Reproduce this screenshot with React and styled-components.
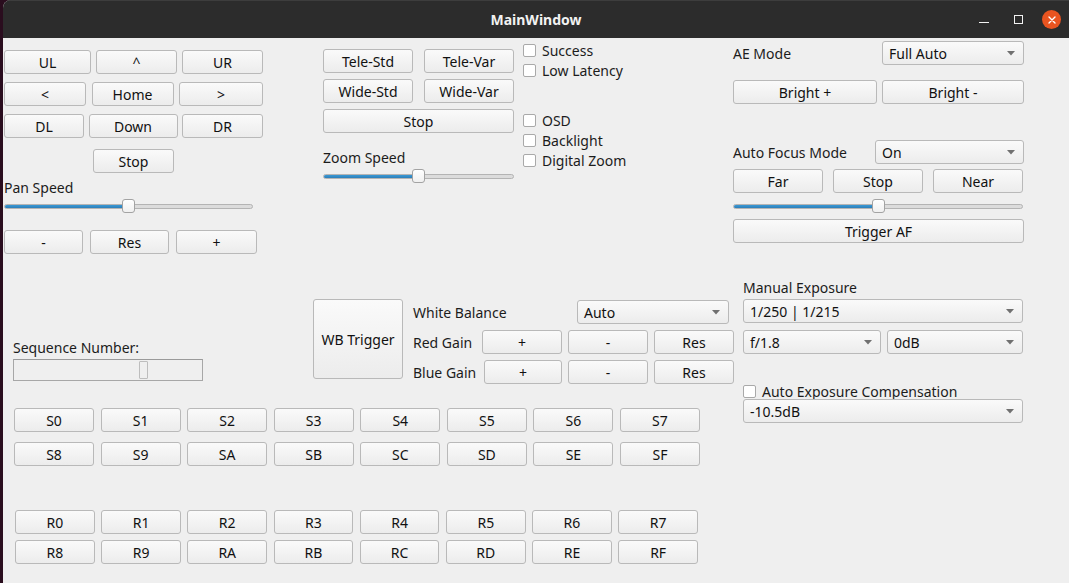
import React from 'react';
import styled, { createGlobalStyle } from 'styled-components';

// Qt "MainWindow" camera control panel, Fusion look on an Ubuntu title bar

const GlobalStyle = createGlobalStyle`
  html, body {
    margin: 0;
    padding: 0;
    background: #2a0d1e;
  }
  body {
    font-family: "Noto Sans", "Open Sans", sans-serif;
    font-size: 14px;
    color: #1c1c1c;
  }
`;

const Screen = styled.div`
  width: 1069px;
  height: 583px;
  display: flex;
  overflow: hidden;
  background: #2a0d1e;
`;

const Window = styled.div`
  margin-left: 3px;
  flex: 1;
  display: flex;
  flex-direction: column;
  background: #efefef;
  border-top-left-radius: 8px;
  overflow: hidden;
`;

const TitleBar = styled.div`
  height: 38px;
  flex: none;
  box-sizing: border-box;
  background: #2c2c2c;
  border-top: 1px solid #3d3d3d;
  display: grid;
  grid-template-columns: 1fr auto 1fr;
  align-items: center;
`;

const Title = styled.div`
  grid-column: 2;
  color: #f2f2f2;
  font-weight: bold;
  font-size: 14px;
`;

const WinControls = styled.div`
  grid-column: 3;
  display: flex;
  justify-content: flex-end;
  align-items: center;
  gap: 14px;
  padding-right: 8px;
`;

const CtlBox = styled.div`
  width: 20px;
  height: 20px;
  display: flex;
  align-items: center;
  justify-content: center;
`;

const MinLine = styled.span`
  width: 10px;
  height: 1.5px;
  background: #f2f2f2;
  margin-top: 6px;
`;

const MaxSquare = styled.span`
  width: 7px;
  height: 7px;
  border: 1px solid #f2f2f2;
`;

const CloseDot = styled.div`
  width: 19px;
  height: 19px;
  border-radius: 50%;
  background: #e95420;
  display: flex;
  align-items: center;
  justify-content: center;
`;

const Body = styled.div`
  flex: 1;
  display: flex;
  flex-direction: column;
`;

const TopRow = styled.div`
  height: 242px;
  display: flex;
  align-items: flex-start;
`;

const Column = styled.div`
  display: flex;
  flex-direction: column;
  width: ${p => p.$w}px;
  margin-left: ${p => p.$ml || 0}px;
  padding-top: ${p => p.$pt || 0}px;
  margin-top: ${p => p.$mt || 0}px;
`;

const BtnRow = styled.div`
  display: flex;
  align-items: center;
  justify-content: ${p => p.$justify || 'space-between'};
  width: ${p => (p.$w ? `${p.$w}px` : 'auto')};
  margin-top: ${p => p.$mt || 0}px;
  gap: ${p => p.$gap || 0}px;
`;

const Button = styled.div`
  box-sizing: border-box;
  width: ${p => p.$w}px;
  height: ${p => p.$h || 24}px;
  flex: none;
  display: flex;
  align-items: center;
  justify-content: center;
  border: 1px solid #b9b9b9;
  border-radius: 3px;
  background: linear-gradient(to bottom, #fafafa, #ececec);
  color: #111;
  font-size: 14px;
  white-space: nowrap;
  margin-left: ${p => p.$ml || 0}px;
  margin-top: ${p => p.$mt || 0}px;
`;

const Combo = styled(Button)`
  justify-content: space-between;
  padding: 0 8px 0 6px;
`;

const Label = styled.div`
  height: 17px;
  line-height: 17px;
  white-space: nowrap;
  color: #1c1c1c;
  width: ${p => (p.$w ? `${p.$w}px` : 'auto')};
  flex: none;
  margin-top: ${p => p.$mt || 0}px;
`;

const CheckRow = styled.div`
  height: ${p => p.$h || 20}px;
  display: flex;
  align-items: center;
  gap: 6px;
  white-space: nowrap;
  margin-top: ${p => p.$mt || 0}px;
`;

const CheckBox = styled.span`
  box-sizing: border-box;
  width: 13px;
  height: 13px;
  flex: none;
  border: 1px solid #a9a9a9;
  border-radius: 2px;
  background: #ffffff;
`;

const SliderWrap = styled.div`
  position: relative;
  width: ${p => p.$w}px;
  height: 14px;
  margin-top: ${p => p.$mt || 0}px;
  display: flex;
  align-items: center;
`;

const Groove = styled.div`
  box-sizing: border-box;
  width: 100%;
  height: 5px;
  border: 1px solid #b4b4b4;
  border-radius: 3px;
  background: #dcdcdc;
  overflow: hidden;
  display: flex;
`;

const GrooveFill = styled.div`
  height: 100%;
  background: linear-gradient(to bottom, #3b98d4, #2b7fb9);
  box-shadow: 0 0 0 1px #246a9c;
`;

const Handle = styled.div`
  position: absolute;
  top: 0;
  box-sizing: border-box;
  width: 13px;
  height: 14px;
  border: 1px solid #a3a3a3;
  border-radius: 3px;
  background: linear-gradient(to bottom, #ffffff, #f0f0f0);
`;

const MidRow = styled.div`
  display: flex;
  align-items: flex-start;
`;

const LeftMid = styled.div`
  width: 732px;
  display: flex;
  flex-direction: column;
`;

const WBRow = styled.div`
  display: flex;
  align-items: flex-start;
`;

const SeqBox = styled.div`
  position: relative;
  box-sizing: border-box;
  width: 190px;
  height: 22px;
  margin-top: 3px;
  border: 1px solid #a7a7a7;
  border-top-color: #9a9a9a;
  background: #efefef;
`;

const SeqHandle = styled.div`
  position: absolute;
  left: 125px;
  top: 1px;
  box-sizing: border-box;
  width: 9px;
  height: 18px;
  border: 1px solid #bdbdbd;
  border-radius: 1px;
`;

const KeyGrid = styled.div`
  display: grid;
  grid-template-columns: repeat(8, 1fr);
  column-gap: 6.5px;
  row-gap: ${p => p.$rowGap}px;
  width: ${p => p.$w}px;
  margin-left: ${p => p.$ml}px;
  margin-top: ${p => p.$mt}px;

  ${Button} {
    width: auto;
  }
`;

const Arrow = () => (
  <svg width="8" height="5" viewBox="0 0 8 5">
    <polygon points="0,0 8,0 4,4.5" fill="#707070" />
  </svg>
);

const Slider = ({ w, handle, mt }) => (
  <SliderWrap $w={w} $mt={mt}>
    <Groove>
      <GrooveFill style={{ width: handle + 6 }} />
    </Groove>
    <Handle style={{ left: handle }} />
  </SliderWrap>
);

const Select = ({ w, children, ...rest }) => (
  <Combo $w={w} {...rest}>
    <span>{children}</span>
    <Arrow />
  </Combo>
);

const Check = ({ children, mt, h }) => (
  <CheckRow $mt={mt} $h={h}>
    <CheckBox />
    <span>{children}</span>
  </CheckRow>
);

const sKeys = ['S0', 'S1', 'S2', 'S3', 'S4', 'S5', 'S6', 'S7', 'S8', 'S9', 'SA', 'SB', 'SC', 'SD', 'SE', 'SF'];
const rKeys = sKeys.map(k => 'R' + k.slice(1));

export default function App() {
  return (
    <Screen>
      <GlobalStyle />
      <Window>
        <TitleBar>
          <Title>MainWindow</Title>
          <WinControls>
            <CtlBox><MinLine /></CtlBox>
            <CtlBox><MaxSquare /></CtlBox>
            <CloseDot>
              <svg width="8" height="8" viewBox="0 0 8 8">
                <path d="M1 1 L7 7 M7 1 L1 7" stroke="#fff" strokeWidth="1.4" strokeLinecap="round" />
              </svg>
            </CloseDot>
          </WinControls>
        </TitleBar>

        <Body>
          <TopRow>
            {/* pan / tilt */}
            <Column $w={259} $ml={1} $pt={12}>
              <BtnRow $w={259}>
                <Button $w={87}>UL</Button>
                <Button $w={81}>^</Button>
                <Button $w={81}>UR</Button>
              </BtnRow>
              <BtnRow $w={259} $mt={8}>
                <Button $w={82}>&lt;</Button>
                <Button $w={82}>Home</Button>
                <Button $w={84}>&gt;</Button>
              </BtnRow>
              <BtnRow $w={259} $mt={8}>
                <Button $w={80}>DL</Button>
                <Button $w={89}>Down</Button>
                <Button $w={81}>DR</Button>
              </BtnRow>
              <BtnRow $w={259} $mt={11} $justify="center">
                <Button $w={81}>Stop</Button>
              </BtnRow>
              <Label $mt={6}>Pan Speed</Label>
              <Slider w={249} handle={118} mt={3} />
              <BtnRow $w={253} $mt={17}>
                <Button $w={79}>-</Button>
                <Button $w={79}>Res</Button>
                <Button $w={81}>+</Button>
              </BtnRow>
            </Column>

            {/* zoom */}
            <Column $w={191} $ml={60} $pt={11}>
              <BtnRow $w={191}>
                <Button $w={90}>Tele-Std</Button>
                <Button $w={90}>Tele-Var</Button>
              </BtnRow>
              <BtnRow $w={191} $mt={6}>
                <Button $w={90}>Wide-Std</Button>
                <Button $w={90}>Wide-Var</Button>
              </BtnRow>
              <Button $w={191} $mt={6}>Stop</Button>
              <Label $mt={16}>Zoom Speed</Label>
              <Slider w={191} handle={89} mt={3} />
            </Column>

            {/* toggles */}
            <Column $w={110} $ml={9} $pt={2}>
              <Check>Success</Check>
              <Check>Low Latency</Check>
              <Check mt={30}>OSD</Check>
              <Check>Backlight</Check>
              <Check>Digital Zoom</Check>
            </Column>

            {/* exposure mode / focus */}
            <Column $w={291} $ml={100} $pt={3}>
              <BtnRow $w={291}>
                <Label>AE Mode</Label>
                <Select w={142}>Full Auto</Select>
              </BtnRow>
              <BtnRow $w={291} $mt={15}>
                <Button $w={144}>Bright +</Button>
                <Button $w={142}>Bright -</Button>
              </BtnRow>
              <BtnRow $w={291} $mt={36}>
                <Label>Auto Focus Mode</Label>
                <Select w={149}>On</Select>
              </BtnRow>
              <BtnRow $w={290} $mt={5}>
                <Button $w={90}>Far</Button>
                <Button $w={90}>Stop</Button>
                <Button $w={90}>Near</Button>
              </BtnRow>
              <Slider w={290} handle={139} mt={6} />
              <Button $w={291} $mt={6}>Trigger AF</Button>
            </Column>
          </TopRow>

          <MidRow>
            <LeftMid>
              <WBRow>
                <Column $w={190} $ml={10} $pt={59}>
                  <Label>Sequence Number:</Label>
                  <SeqBox>
                    <SeqHandle />
                  </SeqBox>
                </Column>
                <Button $w={90} $h={80} $ml={110} $mt={19}>WB Trigger</Button>
                <Column $w={321} $ml={10} $pt={20}>
                  <BtnRow $justify="flex-start">
                    <Label $w={164}>White Balance</Label>
                    <Select w={152}>Auto</Select>
                  </BtnRow>
                  <BtnRow $mt={6} $gap={6}>
                    <Label $w={63}>Red Gain</Label>
                    <Button $w={80}>+</Button>
                    <Button $w={80}>-</Button>
                    <Button $w={80}>Res</Button>
                  </BtnRow>
                  <BtnRow $mt={6} $gap={6}>
                    <Label $w={65}>Blue Gain</Label>
                    <Button $w={78}>+</Button>
                    <Button $w={80}>-</Button>
                    <Button $w={80}>Res</Button>
                  </BtnRow>
                </Column>
              </WBRow>

              <KeyGrid $w={686} $ml={11} $mt={24} $rowGap={10}>
                {sKeys.map(k => <Button key={k}>{k}</Button>)}
              </KeyGrid>

              <KeyGrid $w={683} $ml={12} $mt={44} $rowGap={6}>
                {rKeys.map(k => <Button key={k}>{k}</Button>)}
              </KeyGrid>
            </LeftMid>

            {/* manual exposure */}
            <Column $w={280} $ml={8} $mt={-1}>
              <Label>Manual Exposure</Label>
              <Select w={280} $mt={3}>1/250 | 1/215</Select>
              <BtnRow $w={280} $mt={7}>
                <Select w={138}>f/1.8</Select>
                <Select w={136}>0dB</Select>
              </BtnRow>
              <Check mt={29} h={16}>Auto Exposure Compensation</Check>
              <Select w={280}>-10.5dB</Select>
            </Column>
          </MidRow>
        </Body>
      </Window>
    </Screen>
  );
}
